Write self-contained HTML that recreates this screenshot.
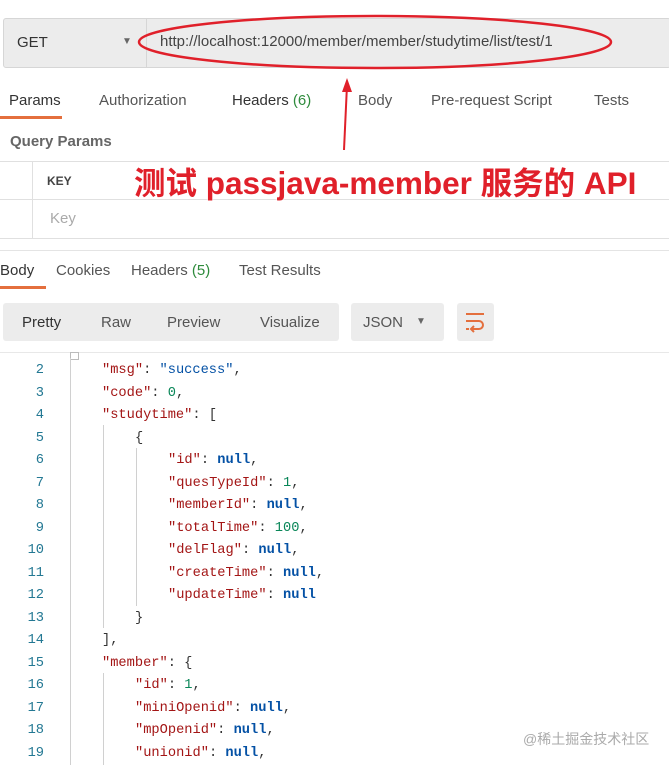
<!DOCTYPE html>
<html><head><meta charset="utf-8"><style>
body{margin:0;width:669px;height:765px;overflow:hidden;background:#fff;font-family:"Liberation Sans","Noto Sans CJK SC",sans-serif;position:relative;color:#333}
.a{position:absolute}
.code{font-family:"Liberation Mono",monospace;font-size:13.7px;}
.ln{position:absolute;left:0;width:44px;text-align:right;color:#237893;font-family:"Liberation Mono",monospace;font-size:13.7px}
.k{color:#a31515}.s{color:#0451a5}.n{color:#098658}.b{color:#0451a5;font-weight:bold}
.g{position:absolute;width:1px;background:#d0d0d0}
</style></head><body>
<div class="a" style="left:3px;top:18px;width:666px;height:48px;background:#ececec;border:1px solid #d6d6d6;border-radius:3px"></div>
<div class="a" style="left:146px;top:18px;width:1px;height:50px;background:#d6d6d6"></div>
<div class="a" style="left:17px;top:34px;font-size:15px;color:#333">GET</div>
<div class="a" style="left:122px;top:36px;font-size:10px;color:#666">▼</div>
<div class="a" style="left:160px;top:33px;font-size:15px;color:#444">http://localhost:12000/member/member/studytime/list/test/1</div>
<svg class="a" style="left:0;top:0" width="669" height="250">
<ellipse cx="375" cy="42" rx="236" ry="26" fill="none" stroke="#e0202a" stroke-width="2.5"/>
<line x1="344" y1="150" x2="347" y2="85" stroke="#e0202a" stroke-width="2"/>
<polygon points="347,78 342,92 352,92" fill="#e0202a"/>
</svg>
<div class="a" style="left:9px;top:92px;font-size:15px;color:#333">Params</div>
<div class="a" style="left:0;top:116px;width:62px;height:3px;background:#e46f3d"></div>
<div class="a" style="left:99px;top:92px;font-size:15px;color:#555">Authorization</div>
<div class="a" style="left:232px;top:92px;font-size:15px;color:#333">Headers <span style="color:#2e8b3c">(6)</span></div>
<div class="a" style="left:358px;top:92px;font-size:15px;color:#555">Body</div>
<div class="a" style="left:431px;top:92px;font-size:15px;color:#555">Pre-request Script</div>
<div class="a" style="left:594px;top:92px;font-size:15px;color:#555">Tests</div>
<div class="a" style="left:10px;top:133px;font-size:15px;font-weight:bold;color:#666">Query Params</div>
<div class="a" style="left:0;top:161px;width:669px;height:1px;background:#e0e0e0"></div>
<div class="a" style="left:0;top:199px;width:669px;height:1px;background:#e0e0e0"></div>
<div class="a" style="left:0;top:238px;width:669px;height:1px;background:#e0e0e0"></div>
<div class="a" style="left:32px;top:161px;width:1px;height:78px;background:#e0e0e0"></div>
<div class="a" style="left:47px;top:174px;font-size:12px;font-weight:bold;color:#444">KEY</div>
<div class="a" style="left:50px;top:210px;font-size:15px;color:#aaa">Key</div>
<div class="a" style="left:134px;top:158px;font-size:31.5px;font-weight:bold;color:#e0202a;font-family:'Liberation Sans','Noto Sans CJK SC',sans-serif;white-space:nowrap;text-shadow:0 0 2px #fff,0 0 2px #fff">测试 passjava-member 服务的 API</div>
<div class="a" style="left:0;top:250px;width:669px;height:1px;background:#e4e4e4"></div>
<div class="a" style="left:0;top:262px;font-size:15px;color:#333">Body</div>
<div class="a" style="left:0;top:286px;width:46px;height:3px;background:#e46f3d"></div>
<div class="a" style="left:56px;top:262px;font-size:15px;color:#555">Cookies</div>
<div class="a" style="left:131px;top:262px;font-size:15px;color:#555">Headers <span style="color:#2e8b3c">(5)</span></div>
<div class="a" style="left:239px;top:262px;font-size:15px;color:#555">Test Results</div>
<div class="a" style="left:3px;top:303px;width:336px;height:38px;background:#ececec;border-radius:3px"></div>
<div class="a" style="left:22px;top:314px;font-size:15px;color:#333">Pretty</div>
<div class="a" style="left:101px;top:314px;font-size:15px;color:#555">Raw</div>
<div class="a" style="left:167px;top:314px;font-size:15px;color:#555">Preview</div>
<div class="a" style="left:260px;top:314px;font-size:15px;color:#555">Visualize</div>
<div class="a" style="left:351px;top:303px;width:93px;height:38px;background:#ececec;border-radius:3px"></div>
<div class="a" style="left:363px;top:314px;font-size:15px;color:#555">JSON</div>
<div class="a" style="left:416px;top:316px;font-size:10px;color:#666">▼</div>
<div class="a" style="left:457px;top:303px;width:37px;height:38px;background:#ececec;border-radius:3px"></div>
<svg class="a" style="left:464px;top:311px" width="22" height="22"><g stroke="#e46f3d" stroke-width="2" fill="none"><line x1="2" y1="3" x2="20" y2="3"/><path d="M2 10 H15 a4 4 0 0 1 0 8 H8"/><path d="M10 15 L7 18 L10 21"/><line x1="2" y1="18" x2="5" y2="18"/></g></svg>
<div class="a" style="left:0;top:352px;width:669px;height:1px;background:#e8e8e8"></div>
<div class="a" style="left:70px;top:352px;width:7px;height:6px;border:1px solid #bbb;background:#fff"></div>
<div class="g" style="left:70px;top:358px;height:407px"></div>
<div class="g" style="left:103px;top:425px;height:203px"></div>
<div class="g" style="left:136px;top:448px;height:158px"></div>
<div class="g" style="left:103px;top:673px;height:92px"></div>
<div class="code a" style="left:0;top:360px;width:669px;line-height:22.5px">
<div style="position:relative;height:22.5px"><span class="ln">2</span><span class="a" style="left:102px"><span class="k">"msg"</span>: <span class="s">"success"</span>,</span></div>
<div style="position:relative;height:22.5px"><span class="ln">3</span><span class="a" style="left:102px"><span class="k">"code"</span>: <span class="n">0</span>,</span></div>
<div style="position:relative;height:22.5px"><span class="ln">4</span><span class="a" style="left:102px"><span class="k">"studytime"</span>: [</span></div>
<div style="position:relative;height:22.5px"><span class="ln">5</span><span class="a" style="left:135px">{</span></div>
<div style="position:relative;height:22.5px"><span class="ln">6</span><span class="a" style="left:168px"><span class="k">"id"</span>: <span class="b">null</span>,</span></div>
<div style="position:relative;height:22.5px"><span class="ln">7</span><span class="a" style="left:168px"><span class="k">"quesTypeId"</span>: <span class="n">1</span>,</span></div>
<div style="position:relative;height:22.5px"><span class="ln">8</span><span class="a" style="left:168px"><span class="k">"memberId"</span>: <span class="b">null</span>,</span></div>
<div style="position:relative;height:22.5px"><span class="ln">9</span><span class="a" style="left:168px"><span class="k">"totalTime"</span>: <span class="n">100</span>,</span></div>
<div style="position:relative;height:22.5px"><span class="ln">10</span><span class="a" style="left:168px"><span class="k">"delFlag"</span>: <span class="b">null</span>,</span></div>
<div style="position:relative;height:22.5px"><span class="ln">11</span><span class="a" style="left:168px"><span class="k">"createTime"</span>: <span class="b">null</span>,</span></div>
<div style="position:relative;height:22.5px"><span class="ln">12</span><span class="a" style="left:168px"><span class="k">"updateTime"</span>: <span class="b">null</span></span></div>
<div style="position:relative;height:22.5px"><span class="ln">13</span><span class="a" style="left:135px">}</span></div>
<div style="position:relative;height:22.5px"><span class="ln">14</span><span class="a" style="left:102px">],</span></div>
<div style="position:relative;height:22.5px"><span class="ln">15</span><span class="a" style="left:102px"><span class="k">"member"</span>: {</span></div>
<div style="position:relative;height:22.5px"><span class="ln">16</span><span class="a" style="left:135px"><span class="k">"id"</span>: <span class="n">1</span>,</span></div>
<div style="position:relative;height:22.5px"><span class="ln">17</span><span class="a" style="left:135px"><span class="k">"miniOpenid"</span>: <span class="b">null</span>,</span></div>
<div style="position:relative;height:22.5px"><span class="ln">18</span><span class="a" style="left:135px"><span class="k">"mpOpenid"</span>: <span class="b">null</span>,</span></div>
<div style="position:relative;height:22.5px"><span class="ln">19</span><span class="a" style="left:135px"><span class="k">"unionid"</span>: <span class="b">null</span>,</span></div>
</div>
<div class="a" style="left:523px;top:729px;font-size:14px;color:#aaa">@稀土掘金技术社区</div>
</body></html>
